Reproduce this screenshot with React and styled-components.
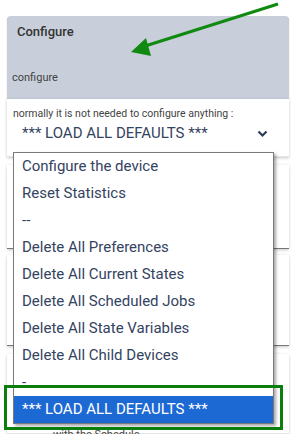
import styled, { createGlobalStyle } from "styled-components";

const options = [
  "Configure the device",
  "Reset Statistics",
  "--",
  "Delete All Preferences",
  "Delete All Current States",
  "Delete All Scheduled Jobs",
  "Delete All State Variables",
  "Delete All Child Devices",
  "-",
  "*** LOAD ALL DEFAULTS ***",
];
const selected = 9;

const Global = createGlobalStyle`
  body {
    margin: 0;
    background: #fff;
    font-family: Roboto, "Liberation Sans", sans-serif;
  }
`;

const Page = styled.div`
  position: relative;
  width: 291px;
  height: 434px;
  overflow: hidden;
  padding: 16px 2px 0 7px;
  box-sizing: border-box;
  display: flex;
  flex-direction: column;
`;

const Card = styled.div`
  height: 86px;
  background: #c9cfda;
  border-radius: 4px 4px 0 0;
  box-shadow: 0 1px 1px rgba(0, 0, 0, 0.45);
  display: flex;
  flex-direction: column;
  justify-content: space-between;
  padding: 8px 0 15px 5px;
  box-sizing: border-box;
  .title {
    font-size: 13px;
    font-weight: 500;
    color: #333;
    padding-left: 5px;
  }
  .sub {
    font-size: 11px;
    color: #444;
  }
`;

const Panel = styled.div`
  background: #fff;
  height: ${(p) => p.h}px;
  margin-top: ${(p) => p.gap || 0}px;
  box-shadow: 0 1px 3px rgba(0, 0, 0, 0.22);
  border-bottom: 1px solid ${(p) => (p.dark ? "#777" : "#e4e4e4")};
  box-sizing: border-box;
  padding: 8px 6px 4px;
  font-size: 10.5px;
  color: #444;
`;

const CutText = styled.div`
  padding: 66px 0 0 40px;
  font-size: 11px;
  color: #444;
`;

const SelectBox = styled.div`
  display: flex;
  align-items: center;
  justify-content: space-between;
  padding: 4px 15px 0 9px;
  font-size: 15px;
  color: #34435f;
  svg {
    margin-top: 3px;
  }
`;

const Dropdown = styled.ul`
  position: absolute;
  left: 13px;
  top: 152px;
  width: 259px;
  margin: 0;
  padding: 0;
  list-style: none;
  background: #fff;
  border: 1px solid #7a7a7a;
  box-shadow: 2px 2px 3px rgba(0, 0, 0, 0.35);
`;

const Option = styled.li`
  height: 27px;
  line-height: 27px;
  padding-left: 8px;
  font-size: 15px;
  color: ${(p) => (p.active ? "#fff" : "#34435f")};
  background: ${(p) => (p.active ? "#1d69d4" : "transparent")};
  white-space: nowrap;
`;

const Highlight = styled.div`
  position: absolute;
  left: 4px;
  top: 385px;
  width: 279px;
  height: 45px;
  border: 3px solid #0b7f0b;
  box-sizing: border-box;
`;

const Arrow = styled.svg`
  position: absolute;
  left: 0;
  top: 0;
`;

export default function App() {
  return (
    <>
      <Global />
      <Page>
        <Card>
          <div className="title">Configure</div>
          <div className="sub">configure</div>
        </Card>
        <Panel h={60}>
          normally it is not needed to configure anything :
          <SelectBox>
            <span>*** LOAD ALL DEFAULTS ***</span>
            <svg width="11" height="8" viewBox="0 0 11 8">
              <path d="M1.5 1.5 L5.5 5.5 L9.5 1.5" fill="none" stroke="#2d3b58" strokeWidth="2.2" />
            </svg>
          </SelectBox>
        </Panel>
        <Panel h={88} gap={8} dark />
        <Panel h={95} gap={6} dark />
        <Panel h={80} gap={8}>
          <CutText>with the Schedule</CutText>
        </Panel>
        <Dropdown>
          {options.map((o, i) => (
            <Option key={i} active={i === selected}>
              {o}
            </Option>
          ))}
        </Dropdown>
        <Highlight />
        <Arrow width="291" height="70" viewBox="0 0 291 70">
          <line x1="278" y1="4" x2="142" y2="47" stroke="#118a11" strokeWidth="3" />
          <polygon points="131,52 146,38 151,56" fill="#118a11" />
        </Arrow>
      </Page>
    </>
  );
}
